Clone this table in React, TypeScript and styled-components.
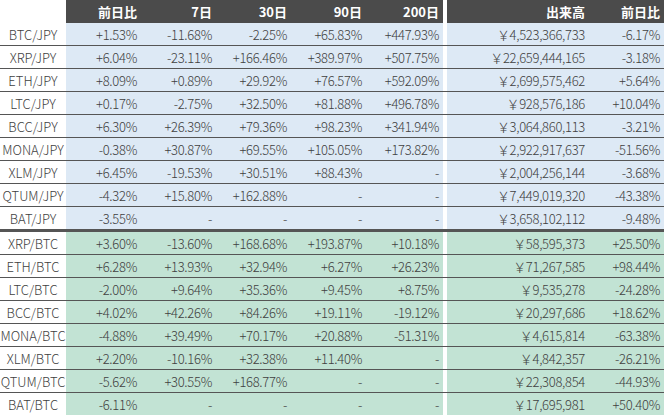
import React from 'react';
import styled, { createGlobalStyle } from 'styled-components';

const GlobalStyle = createGlobalStyle`
  html, body {
    margin: 0;
    padding: 0;
    background: #ffffff;
  }
`;

type Section = 'jpy' | 'btc';

const bg: Record<Section, string> = {
  jpy: '#dde9f5',
  btc: '#c2e3d4',
};

const Table = styled.table`
  width: 664px;
  border-collapse: collapse;
  table-layout: fixed;
  font-family: "Noto Sans CJK JP", "Liberation Sans", sans-serif;
  font-size: 13px;
  font-weight: 300;
  color: #404040;
`;

const Col = styled.col<{ $w: number }>`
  width: ${(p) => p.$w}px;
`;

const HeadCell = styled.th<{ $blank?: boolean }>`
  height: 23px;
  padding: 0 4px 0 0;
  text-align: right;
  font-weight: 700;
  font-size: 13px;
  color: #ffffff;
  background: ${(p) => (p.$blank ? '#ffffff' : '#4b4b4b')};
`;

const Row = styled.tr<{ $last?: boolean }>`
  & > td {
    height: 22px;
    border-bottom: ${(p) => (p.$last ? '3px' : '1px')} solid #555555;
  }
`;

const Label = styled.td`
  padding: 0;
  text-align: center;
  background: #ffffff;
`;

const Cell = styled.td<{ $section: Section }>`
  padding: 0 4px 0 0;
  text-align: right;
  white-space: nowrap;
  background: ${(p) => bg[p.$section]};
  letter-spacing: -0.3px;
`;

const Gap = styled.td`
  padding: 0;
  background: #ffffff;
`;

type Pair = [string, string, string, string, string, string, string, string];

const jpy: Pair[] = [
  ['BTC/JPY', '+1.53%', '-11.68%', '-2.25%', '+65.83%', '+447.93%', '￥4,523,366,733', '-6.17%'],
  ['XRP/JPY', '+6.04%', '-23.11%', '+166.46%', '+389.97%', '+507.75%', '￥22,659,444,165', '-3.18%'],
  ['ETH/JPY', '+8.09%', '+0.89%', '+29.92%', '+76.57%', '+592.09%', '￥2,699,575,462', '+5.64%'],
  ['LTC/JPY', '+0.17%', '-2.75%', '+32.50%', '+81.88%', '+496.78%', '￥928,576,186', '+10.04%'],
  ['BCC/JPY', '+6.30%', '+26.39%', '+79.36%', '+98.23%', '+341.94%', '￥3,064,860,113', '-3.21%'],
  ['MONA/JPY', '-0.38%', '+30.87%', '+69.55%', '+105.05%', '+173.82%', '￥2,922,917,637', '-51.56%'],
  ['XLM/JPY', '+6.45%', '-19.53%', '+30.51%', '+88.43%', '-', '￥2,004,256,144', '-3.68%'],
  ['QTUM/JPY', '-4.32%', '+15.80%', '+162.88%', '-', '-', '￥7,449,019,320', '-43.38%'],
  ['BAT/JPY', '-3.55%', '-', '-', '-', '-', '￥3,658,102,112', '-9.48%'],
];

const btc: Pair[] = [
  ['XRP/BTC', '+3.60%', '-13.60%', '+168.68%', '+193.87%', '+10.18%', '￥58,595,373', '+25.50%'],
  ['ETH/BTC', '+6.28%', '+13.93%', '+32.94%', '+6.27%', '+26.23%', '￥71,267,585', '+98.44%'],
  ['LTC/BTC', '-2.00%', '+9.64%', '+35.36%', '+9.45%', '+8.75%', '￥9,535,278', '-24.28%'],
  ['BCC/BTC', '+4.02%', '+42.26%', '+84.26%', '+19.11%', '-19.12%', '￥20,297,686', '+18.62%'],
  ['MONA/BTC', '-4.88%', '+39.49%', '+70.17%', '+20.88%', '-51.31%', '￥4,615,814', '-63.38%'],
  ['XLM/BTC', '+2.20%', '-10.16%', '+32.38%', '+11.40%', '-', '￥4,842,357', '-26.21%'],
  ['QTUM/BTC', '-5.62%', '+30.55%', '+168.77%', '-', '-', '￥22,308,854', '-44.93%'],
  ['BAT/BTC', '-6.11%', '-', '-', '-', '-', '￥17,695,981', '+50.40%'],
];

const widths = [66, 75, 75, 75, 75, 77, 4, 142, 75];
const heads = ['', '前日比', '7日', '30日', '90日', '200日', '', '出来高', '前日比'];

const renderRows = (rows: Pair[], section: Section, thickEnd: boolean) =>
  rows.map((r, i) => (
    <Row key={r[0]} $last={thickEnd && i === rows.length - 1}>
      <Label>{r[0]}</Label>
      {r.slice(1, 6).map((v, j) => (
        <Cell key={j} $section={section}>{v}</Cell>
      ))}
      <Gap />
      <Cell $section={section}>{r[6]}</Cell>
      <Cell $section={section}>{r[7]}</Cell>
    </Row>
  ));

const App: React.FC = () => {
  return (
    <>
      <GlobalStyle />
      <Table>
        <colgroup>
          {widths.map((w, i) => (
            <Col key={i} $w={w} />
          ))}
        </colgroup>
        <thead>
          <tr>
            {heads.map((h, i) => (
              <HeadCell key={i} $blank={h === ''}>{h}</HeadCell>
            ))}
          </tr>
        </thead>
        <tbody>
          {renderRows(jpy, 'jpy', true)}
          {renderRows(btc, 'btc', false)}
        </tbody>
      </Table>
    </>
  );
};

export default App;
